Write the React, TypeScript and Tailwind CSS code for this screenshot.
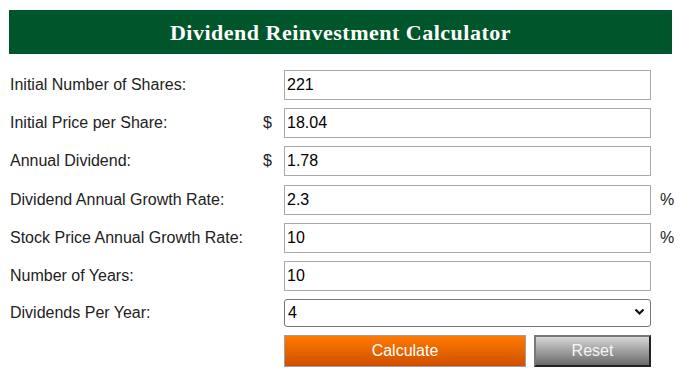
import { useState } from "react";

type Field = {
  label: string;
  value: string;
  prefix?: string;
  suffix?: string;
};

const FIELDS: Field[] = [
  { label: "Initial Number of Shares:", value: "221" },
  { label: "Initial Price per Share:", value: "18.04", prefix: "$" },
  { label: "Annual Dividend:", value: "1.78", prefix: "$" },
  { label: "Dividend Annual Growth Rate:", value: "2.3", suffix: "%" },
  { label: "Stock Price Annual Growth Rate:", value: "10", suffix: "%" },
  { label: "Number of Years:", value: "10" },
];

const App = () => {
  const [values, setValues] = useState<string[]>(FIELDS.map((f) => f.value));
  const [perYear, setPerYear] = useState<string>("4");

  return (
    <div
      className="w-[689px] h-[383px] bg-white text-[#222] pt-[10px]"
      style={{ fontFamily: '"Liberation Sans", Arial, sans-serif' }}
    >
      <header
        className="mx-[9px] w-[663px] h-[44px] bg-[#01552b] text-white flex items-center justify-center text-[22px] tracking-[0.5px] font-bold"
        style={{ fontFamily: '"Liberation Serif", "Times New Roman", serif' }}
      >
        Dividend Reinvestment Calculator
      </header>

      {/* Form rows */}
      <div className="mt-[16px] grid grid-cols-[254px_30px_367px_1fr] gap-y-[8.2px] items-center">
        {FIELDS.map((f, i) => (
          <div key={`row:${i}`} className="contents">
            <label className="pl-[10px] text-[16px] leading-[30px]">{f.label}</label>
            <span className="text-[16px] pl-[9px]">{f.prefix}</span>
            <input
              type="text"
              value={values[i]}
              onChange={(e) => {
                const next = [...values];
                next[i] = e.target.value;
                setValues(next);
              }}
              className="h-[30px] w-[367px] border border-[#a9a9a9] px-[2px] text-[16px] text-black outline-none"
            />
            <span className="text-[16px] pl-[9px]">{f.suffix}</span>
          </div>
        ))}

        <label className="pl-[10px] text-[16px] leading-[28px]">Dividends Per Year:</label>
        <span />
        <div className="relative h-[28px] w-[367px]">
          <select
            value={perYear}
            onChange={(e) => setPerYear(e.target.value)}
            className="appearance-none h-[28px] w-full border border-[#767676] rounded-[3px] pl-[3px] text-[16px] text-black bg-white outline-none"
          >
            {["1", "2", "4", "12"].map((n) => (
              <option key={n} value={n}>
                {n}
              </option>
            ))}
          </select>
          <svg
            className="absolute right-[6px] top-[9px] pointer-events-none"
            width="11"
            height="8"
            viewBox="0 0 11 8"
          >
            <path d="M1.5 1.5 L5.5 5.5 L9.5 1.5" fill="none" stroke="#111" strokeWidth="2.2" />
          </svg>
        </div>
        <span />

        <span />
        <span />
        <div className="flex gap-[8px]">
          <button
            type="button"
            className="h-[32px] w-[242px] border border-[#a0a0a0] bg-gradient-to-b from-[#ff7a00] to-[#d04f00] text-white text-[16px]"
          >
            Calculate
          </button>
          <button
            type="button"
            className="h-[32px] w-[117px] border-2 border-t-[#7a7a7a] border-l-[#7a7a7a] border-r-[#222] border-b-[#222] bg-gradient-to-b from-[#d8d8d8] to-[#6a6a6a] text-[#f4f4f4] text-[16px]"
          >
            Reset
          </button>
        </div>
        <span />
      </div>
    </div>
  );
};

export default App;
